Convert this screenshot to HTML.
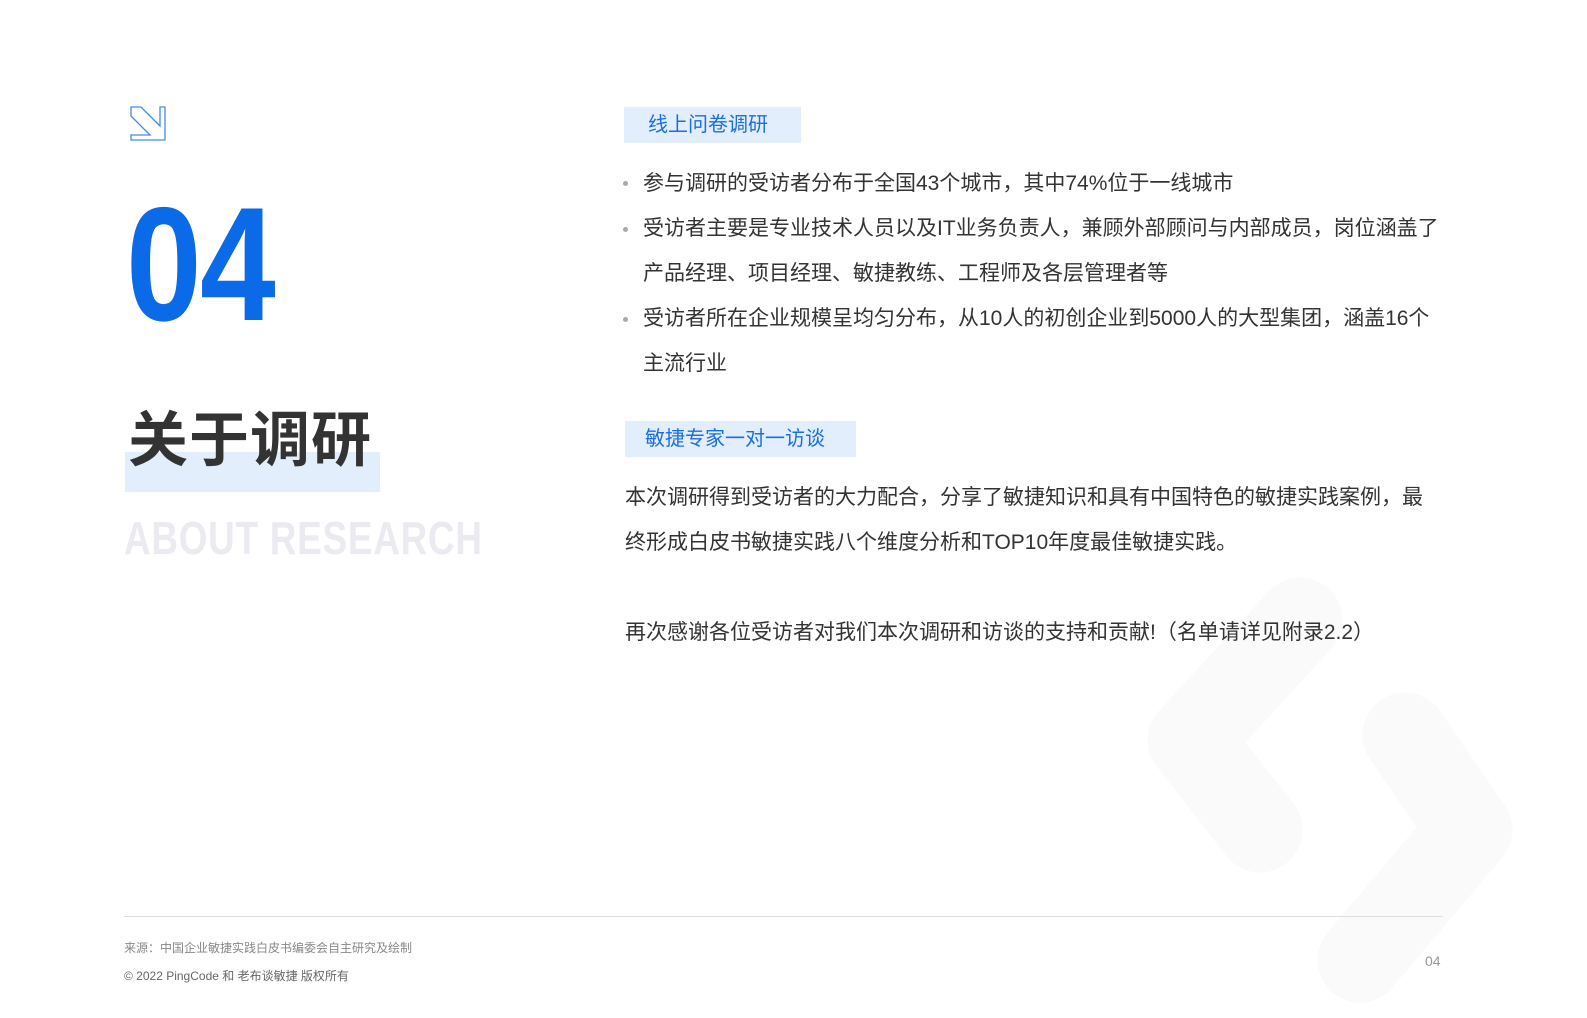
<!DOCTYPE html>
<html><head><meta charset="utf-8"><style>
*{margin:0;padding:0;box-sizing:border-box}
body{width:1587px;height:1018px;background:#fff;position:relative;overflow:hidden;font-family:"Liberation Sans","Noto Sans CJK SC",sans-serif;color:#333}
.a{position:absolute;white-space:nowrap}
.t{font-size:21px;line-height:24px;color:#333}
.tag{position:absolute;background:#e3eefc;color:#1a6fe0;font-size:20px;line-height:36px;padding-left:24px}
.dot{position:absolute;width:5px;height:5px;border-radius:50%;background:#aaa}
</style></head><body>
<svg class="a" style="left:0;top:0" width="1587" height="1018">
<g fill="none" stroke="#fafafa" stroke-width="85" stroke-linecap="round" stroke-linejoin="round">
<polyline points="1300,620 1190,740 1260,830"/>
<polyline points="1405,735 1470,830 1360,960"/>
</g>
<path d="M131 107 L141 107 L160 126 L160 107 L165 107 L165 140 L131 140 L131 135 L150 135 L131 116 Z" fill="none" stroke="#3d8cf0" stroke-width="1.3"/>
</svg>
<div class="a" style="left:126px;top:180px;font-size:162px;line-height:170px;font-weight:bold;color:#0a6ae8;transform:scaleX(0.84);transform-origin:left top;letter-spacing:-2px">04</div>
<div class="a" style="left:125px;top:452px;width:255px;height:40px;background:#e3eefc"></div>
<div class="a" style="left:128px;top:405px;font-size:60px;line-height:72px;font-weight:bold;color:#333;letter-spacing:1px">关于调研</div>
<div class="a" style="left:124px;top:512px;font-size:46px;line-height:52px;font-weight:bold;color:#eaeaf0;transform:scaleX(0.8);transform-origin:left top;letter-spacing:1px">ABOUT RESEARCH</div>

<div class="tag" style="left:624px;top:107px;width:177px">线上问卷调研</div>
<div class="dot" style="left:623px;top:181px"></div>
<div class="a t" style="left:643px;top:172px">参与调研的受访者分布于全国43个城市，其中74%位于一线城市</div>
<div class="dot" style="left:623px;top:227px"></div>
<div class="a t" style="left:643px;top:217px">受访者主要是专业技术人员以及IT业务负责人，兼顾外部顾问与内部成员，岗位涵盖了</div>
<div class="a t" style="left:643px;top:262px">产品经理、项目经理、敏捷教练、工程师及各层管理者等</div>
<div class="dot" style="left:623px;top:317px"></div>
<div class="a t" style="left:643px;top:307px">受访者所在企业规模呈均匀分布，从10人的初创企业到5000人的大型集团，涵盖16个</div>
<div class="a t" style="left:643px;top:352px">主流行业</div>

<div class="tag" style="left:625px;top:421px;width:231px;padding-left:20px">敏捷专家一对一访谈</div>
<div class="a t" style="left:625px;top:486px">本次调研得到受访者的大力配合，分享了敏捷知识和具有中国特色的敏捷实践案例，最</div>
<div class="a t" style="left:625px;top:531px">终形成白皮书敏捷实践八个维度分析和TOP10年度最佳敏捷实践。</div>
<div class="a t" style="left:625px;top:621px">再次感谢各位受访者对我们本次调研和访谈的支持和贡献!（名单请详见附录2.2）</div>

<div class="a" style="left:124px;top:916px;width:1319px;height:1px;background:#dedede"></div>
<div class="a" style="left:124px;top:940px;font-size:12px;line-height:16px;color:#888">来源：中国企业敏捷实践白皮书编委会自主研究及绘制</div>
<div class="a" style="left:124px;top:968px;font-size:12px;line-height:16px;color:#666">© 2022 PingCode 和 老布谈敏捷 版权所有</div>
<div class="a" style="left:1425px;top:953px;font-size:14px;line-height:16px;color:#999">04</div>
</body></html>
